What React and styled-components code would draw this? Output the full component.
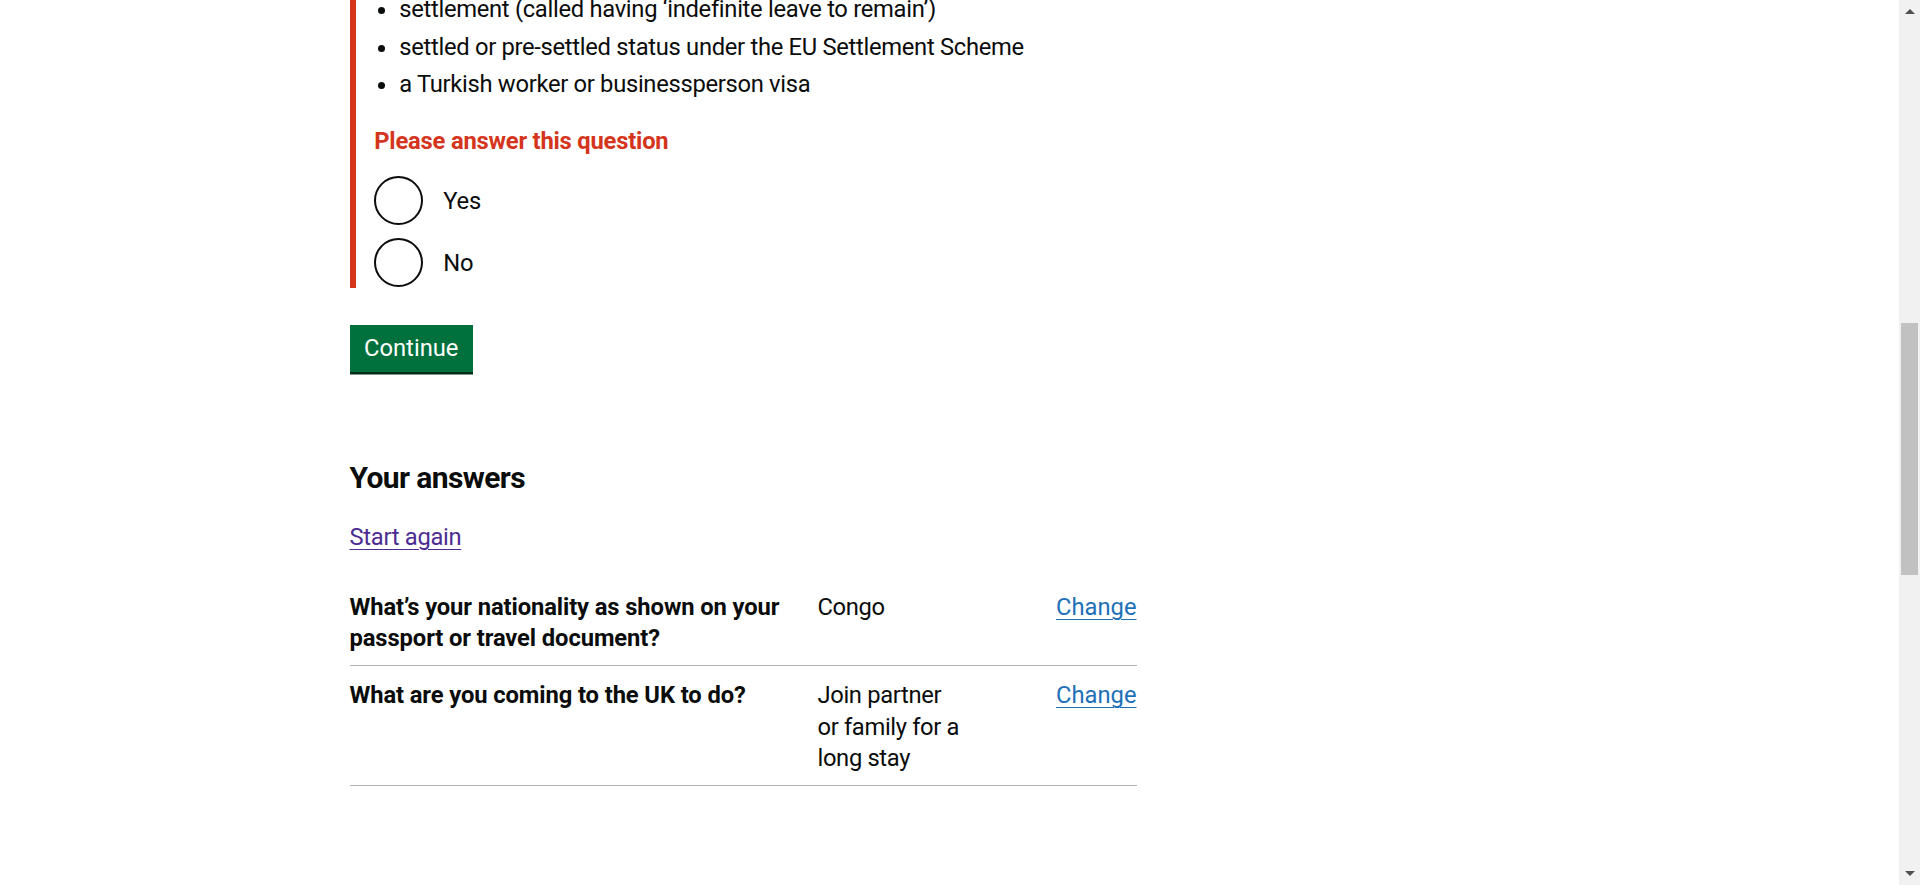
import React from "react";
import styled, { createGlobalStyle } from "styled-components";

const GlobalStyle = createGlobalStyle`
  body {
    margin: 0;
    padding-right: 21px;
    background: #ffffff;
    color: #0b0c0c;
    font-family: Roboto, "Liberation Sans", Arial, sans-serif;
  }
`;

const Page = styled.main`
  max-width: 1200px;
  margin: 0 auto;
`;

const Column = styled.div`
  width: 787px;
`;

const FormGroup = styled.div`
  border-left: 6px solid #d4351c;
  padding-left: 18.75px;
`;

const BulletList = styled.ul`
  margin: -6px 0 0;
  padding-left: 25px;
  list-style-type: disc;
`;

const ListItem = styled.li`
  margin-bottom: 6.25px;
  font-size: 23.75px;
  line-height: 31.25px;
  letter-spacing: -0.3px;
`;

const ErrorMessage = styled.p`
  margin: 26px 0 17.5px;
  color: #d4351c;
  font-size: 23.75px;
  line-height: 31.25px;
  font-weight: 700;
  letter-spacing: -0.2px;
`;

const RadioItem = styled.label`
  display: flex;
  align-items: center;
  min-height: 50px;
  margin-bottom: 12.5px;

  &:last-child {
    margin-bottom: 0;
  }
`;

const RadioCircle = styled.span`
  flex: none;
  width: 49px;
  height: 49px;
  box-sizing: border-box;
  border: 2.5px solid #0b0c0c;
  border-radius: 50%;
`;

const RadioLabel = styled.span`
  margin-left: 20px;
  padding-top: 3px;
  font-size: 23.75px;
  line-height: 31.25px;
  letter-spacing: -0.2px;
`;

const Button = styled.button`
  display: block;
  margin: 37.5px 0 0;
  padding: 10px 12.5px 8.75px;
  border: 2.5px solid transparent;
  border-radius: 0;
  background: #00703c;
  box-shadow: 0 2.5px 0 #002d18;
  color: #ffffff;
  font-family: inherit;
  font-size: 23.75px;
  line-height: 1;
  cursor: pointer;
`;

const Heading = styled.h2`
  margin: 87.5px 0 0;
  font-size: 30px;
  line-height: 37.5px;
  font-weight: 700;
  letter-spacing: -0.6px;
`;

const Paragraph = styled.p`
  margin: 25px 0 0;
  font-size: 23.75px;
  line-height: 31.25px;
  letter-spacing: -0.3px;
`;

const Link = styled.a`
  color: ${(p) => (p.$visited ? "#4c2c92" : "#1d70b8")};
  text-decoration: underline;
  text-decoration-thickness: 1px;
  text-underline-offset: 0.16em;
  cursor: pointer;
`;

const SummaryList = styled.dl`
  margin: 25px 0 0;
`;

const Row = styled.div`
  display: grid;
  grid-template-columns: 468px 147px 1fr;
  padding: 14px 0 11px;
  border-bottom: 1px solid #b1b4b6;
  font-size: 23.75px;
  line-height: 31.25px;
`;

const Key = styled.dt`
  padding-right: 25px;
  font-weight: 700;
  letter-spacing: -0.1px;
`;

const Value = styled.dd`
  margin: 0;
  letter-spacing: -0.35px;
`;

const Actions = styled.dd`
  margin: 0;
  text-align: right;
`;

const Hidden = styled.span`
  position: absolute;
  width: 1px;
  height: 1px;
  overflow: hidden;
  clip: rect(0 0 0 0);
  white-space: nowrap;
`;

/* browser scrollbar as it shows in the page, drawn over the right edge */
const ScrollTrack = styled.div`
  position: fixed;
  top: 0;
  right: 0;
  width: 21px;
  height: 100vh;
  display: flex;
  flex-direction: column;
  align-items: center;
  background: #f1f1f1;
`;

const Arrow = styled.span`
  flex: none;
  width: 0;
  height: 0;
  margin: ${(p) => (p.$down ? "auto 0 9px" : "9px 0 0")};
  border-left: 5px solid transparent;
  border-right: 5px solid transparent;
  ${(p) =>
    p.$down ? "border-top: 5px solid #505050;" : "border-bottom: 5px solid #505050;"}
`;

const Thumb = styled.span`
  flex: none;
  width: 17px;
  height: 252px;
  margin-top: 309px;
  background: #c1c1c1;
`;

const reasons = [
  "settlement (called having \u2018indefinite leave to remain\u2019)",
  "settled or pre-settled status under the EU Settlement Scheme",
  "a Turkish worker or businessperson visa",
];

const answers = [
  {
    question: "What\u2019s your nationality as shown on your passport or travel document?",
    answer: "Congo",
    hidden: "nationality",
  },
  {
    question: "What are you coming to the UK to do?",
    answer: "Join partner or family for a long stay",
    hidden: "reason for coming",
  },
];

export default function App() {
  return (
    <>
      <GlobalStyle />
      <Page>
        <Column>
          <FormGroup>
            <BulletList>
              {reasons.map((r) => (
                <ListItem key={r}>{r}</ListItem>
              ))}
            </BulletList>
            <ErrorMessage>Please answer this question</ErrorMessage>
            <div>
              <RadioItem>
                <RadioCircle />
                <RadioLabel>Yes</RadioLabel>
              </RadioItem>
              <RadioItem>
                <RadioCircle />
                <RadioLabel>No</RadioLabel>
              </RadioItem>
            </div>
          </FormGroup>

          <Button type="button">Continue</Button>

          <Heading>Your answers</Heading>
          <Paragraph>
            <Link $visited href="#">
              Start again
            </Link>
          </Paragraph>

          <SummaryList>
            {answers.map((a) => (
              <Row key={a.hidden}>
                <Key>{a.question}</Key>
                <Value>{a.answer}</Value>
                <Actions>
                  <Link href="#">
                    Change<Hidden> {a.hidden}</Hidden>
                  </Link>
                </Actions>
              </Row>
            ))}
          </SummaryList>
        </Column>
      </Page>
      <ScrollTrack aria-hidden="true">
        <Arrow />
        <Thumb />
        <Arrow $down />
      </ScrollTrack>
    </>
  );
}
